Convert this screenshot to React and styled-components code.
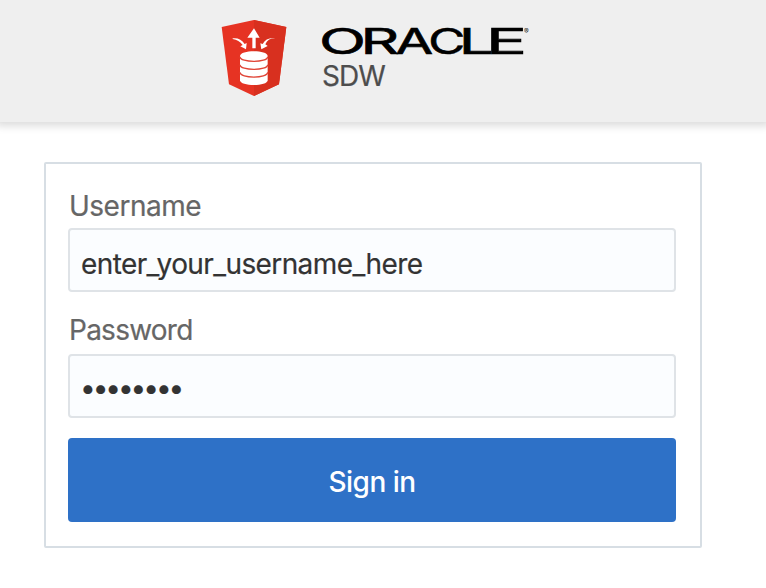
import React from "react";
import styled, { createGlobalStyle } from "styled-components";

const GlobalStyle = createGlobalStyle`
  * { box-sizing: border-box; }
  body {
    margin: 0;
    background: #fff;
    font-family: Inter, "Liberation Sans", sans-serif;
    font-size: 28px;
  }
`;

const Page = styled.div`
  min-height: 588px;
  overflow: hidden;
`;

const Header = styled.header`
  display: flex;
  gap: 30px;
  height: 122px;
  padding: 19px 0 0 220px;
  background: #efefef;
  box-shadow: 0 0 8px 4px rgba(0, 0, 0, 0.14);
`;

const Shield = styled.svg`
  display: block;
  width: 68px;
  height: 78px;
`;

const Brand = styled.div`
  display: flex;
  flex-direction: column;
  padding-top: 6px;
`;

const Wordmark = styled.svg`
  display: block;
  width: 220px;
  height: 32px;
  overflow: visible;
  font-family: Inter, sans-serif;
`;

const Product = styled.span`
  height: 34px;
  line-height: 34px;
  margin: 2px 0 0 4px;
  letter-spacing: -1px;
  color: #4d4d4d;
  -webkit-text-stroke: 0.2px #4d4d4d;
`;

const Form = styled.form`
  display: flex;
  flex-direction: column;
  width: 658px;
  height: 386px;
  margin: 40px 0 0 44px;
  padding: 22px 24px 24px 22px;
  border: 2px solid #d7dee4;
  border-radius: 2px;
`;

const Label = styled.label`
  height: 42px;
  line-height: ${(p) => p.$line};
  padding-left: 1px;
  letter-spacing: ${(p) => p.$tracking};
  color: #666;
  -webkit-text-stroke: 0.2px #666;
`;

const Field = styled.input`
  width: 608px;
  height: 64px;
  margin: 0 0 20px;
  padding: ${(p) => p.$padding};
  border: 2px solid #dfe3e7;
  border-radius: 4px;
  outline: none;
  background: #fbfdff;
  color: #333;
  font: inherit;
  letter-spacing: ${(p) => p.$tracking};
  -webkit-text-stroke: 0.2px #333;
`;

const SignIn = styled.button`
  width: 608px;
  height: 84px;
  padding: 4px 0 0;
  border: 0;
  border-radius: 4px;
  background: #2e71c7;
  color: #fff;
  font: inherit;
  font-weight: 500;
  letter-spacing: -0.5px;
`;

function ShieldIcon() {
  return (
    <Shield viewBox="30 27 204 234" aria-hidden="true">
      <path d="M132 30 229 51 207 223 132 258 57 223 35 51Z" fill="#e63323" />
      <path d="M132 30 229 51 207 223 132 258Z" fill="#d8301f" />
      <g fill="#fff">
        <path d="M132 55 149 83H137V115H127V83H112Z" />
        <path d="M68 85Q91 82 104 102L110 99 108 118 91 109 98 105Q87 90 68 87Z" />
        <path d="M196 84Q174 84 166 103L173 108 154 118 151 100 158 102Q168 81 196 84Z" />
        <path d="M90 138C90 119 173 119 173 138V211C173 230 90 230 90 211Z" />
      </g>
      <g fill="none" stroke="#e04436" strokeWidth="4">
        <path d="M90 140C90 159 173 159 173 140" />
        <path d="M90 164C90 183 173 183 173 164" />
        <path d="M90 187C90 206 173 206 173 187" />
      </g>
    </Shield>
  );
}

const LETTERS = [
  { char: "O", x: 1, width: 47 },
  { char: "R", x: 42.6, width: 38.8 },
  { char: "A", x: 77.6, width: 37.7 },
  { char: "C", x: 110.2, width: 37 },
  { char: "L", x: 140.7, width: 35 },
  { char: "E", x: 167.8, width: 41.4 },
];

function OracleMark() {
  return (
    <Wordmark viewBox="0 0 220 32">
      <text y="28.7" fontSize="35" fill="#000" stroke="#000" strokeWidth="0.6">
        {LETTERS.map(({ char, x, width }) => (
          <tspan
            key={char}
            x={x}
            textLength={width}
            lengthAdjust="spacingAndGlyphs"
          >
            {char}
          </tspan>
        ))}
      </text>
      <text x="206" y="8.5" fontSize="7" fill="#222">®</text>
    </Wordmark>
  );
}

export default function App() {
  return (
    <Page>
      <GlobalStyle />
      <Header>
        <ShieldIcon />
        <Brand>
          <OracleMark />
          <Product>SDW</Product>
        </Brand>
      </Header>
      <Form>
        <Label htmlFor="username" $line="40px" $tracking="-0.5px">Username</Label>
        <Field
          id="username"
          defaultValue="enter_your_username_here"
          $padding="8px 11px 0"
          $tracking="-0.6px"
        />
        <Label htmlFor="password" $line="36px" $tracking="-0.75px">Password</Label>
        <Field
          id="password"
          type="password"
          defaultValue="password"
          $padding="4px 10px 0"
          $tracking="-3.1px"
        />
        <SignIn type="button">Sign in</SignIn>
      </Form>
    </Page>
  );
}
